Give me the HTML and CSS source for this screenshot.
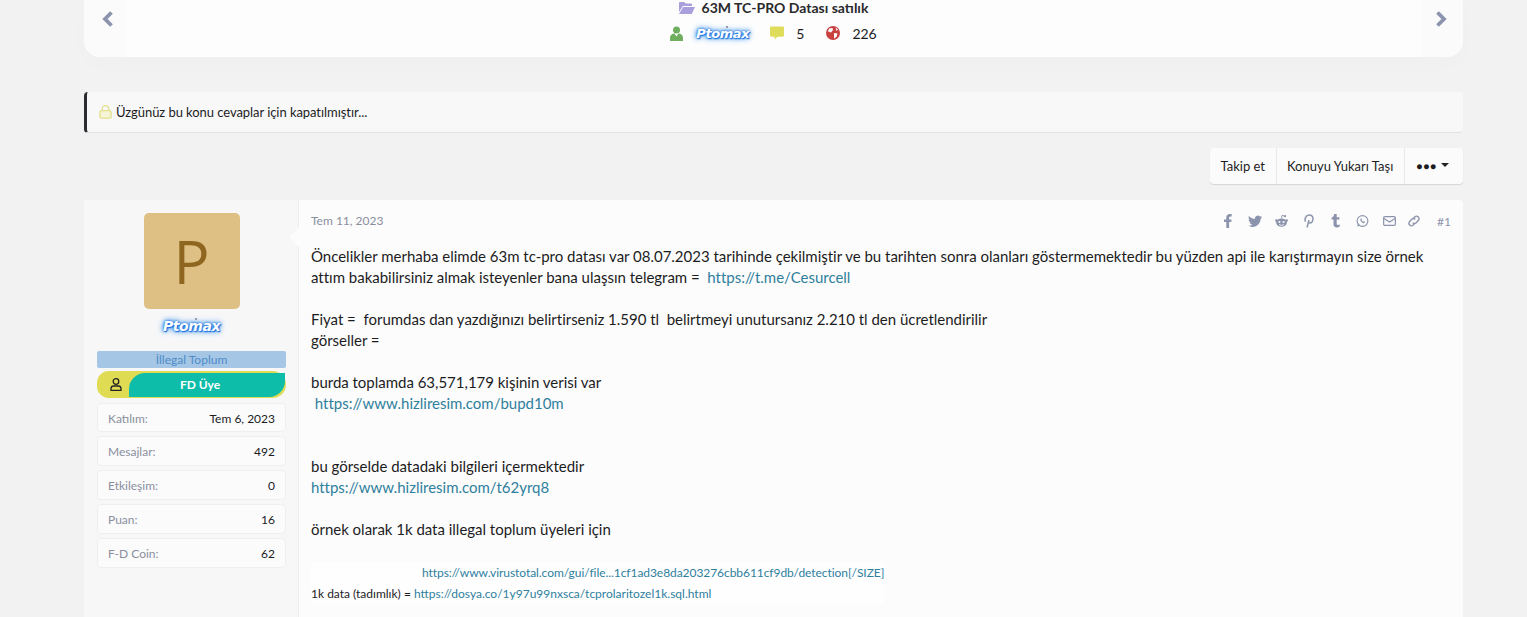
FILE: index.html
```html
<!DOCTYPE html>
<html lang="en">
<head>
    <meta charset="UTF-8">
    <title>63M TC-PRO Datası satılık</title>
    <link rel="stylesheet" href="styles.css">
</head>
<body>
<div class="page">

    <!-- Previous / next thread -->
    <div class="thread-nav">
        <a class="nav-arrow nav-prev">
            <svg width="12" height="16" viewBox="0 0 12 16"><path d="M9.500 1.500 3 8l6.500 6.500" fill="none" stroke="#8c94ad" stroke-width="3.800"/></svg>
        </a>
        <div class="nav-info">
            <div class="nav-title">
                <svg class="folder" width="16" height="12" viewBox="0 0 16 12"><path d="M0 1.200C0 .5.500 0 1.200 0h4l1.600 1.600h5c.7 0 1.200.5 1.200 1.200V4H4L0 10z" fill="#a89fdc"/><path d="M4.200 5H16l-3.200 7H0z" fill="#a89fdc"/></svg>
                63M TC-PRO Datası satılık
            </div>
            <div class="nav-stats">
                <svg width="13" height="15" viewBox="0 0 13 15"><circle cx="6.500" cy="4" r="3.500" fill="#6fae5e"/><path d="M0 15v-3c0-3 2-4.500 4.500-4.500l2 3 2-3C11 7.500 13 9 13 12v3z" fill="#6fae5e"/></svg>
                <span class="username small-name">Ptomax</span>
                <svg class="stat-comment" width="14" height="14" viewBox="0 0 15 14"><path d="M1.500 0h12c.8 0 1.500.7 1.500 1.500v8c0 .8-.7 1.500-1.500 1.500H8l-3 3v-3H1.500C.7 11 0 10.300 0 9.500v-8C0 .7.700 0 1.500 0z" fill="#dfdb5b"/></svg>
                <span class="stat-num">5</span>
                <svg class="stat-globe" width="14" height="14" viewBox="0 0 14 14"><circle cx="7" cy="7" r="7" fill="#c9413f"/><path d="M3 2.500 6.500 2 7 4 5 6.500 2 5.500zM8 7l3.500.5-1 3.500L8 12.500zM9.500 1.500 12 3.500 10.500 5z" fill="#fff"/></svg>
                <span class="stat-num">226</span>
            </div>
        </div>
        <a class="nav-arrow nav-next">
            <svg width="12" height="16" viewBox="0 0 12 16"><path d="M2.500 1.500 9 8l-6.500 6.500" fill="none" stroke="#8c94ad" stroke-width="3.800"/></svg>
        </a>
    </div>

    <div class="notice">
        <svg width="13" height="14" viewBox="0 0 14 15"><rect x="1" y="6" width="12" height="8" rx="1.500" fill="#f6f4d6" stroke="#e3df8c" stroke-width="1.400"/><path d="M3.500 6V4.200a3.500 3.500 0 0 1 7 0V6" fill="none" stroke="#e3df8c" stroke-width="1.400"/></svg>
        Üzgünüz bu konu cevaplar için kapatılmıştır...
    </div>

    <div class="button-row">
        <div class="button-group">
            <a class="btn">Takip et</a>
            <a class="btn btn-bump">Konuyu Yukarı Taşı</a>
            <a class="btn btn-more"><span class="dots">●●●</span><span class="caret"></span></a>
        </div>
    </div>

    <!-- First post -->
    <div class="post">
        <div class="post-user">
            <div class="avatar">P</div>
            <div class="username">Ptomax</div>
            <div class="banner-blue">İllegal Toplum</div>
            <div class="banner-rank">
                <span class="rank-icon">
                    <svg width="12" height="13" viewBox="0 0 12 13"><circle cx="6" cy="3.500" r="2.800" fill="none" stroke="#222" stroke-width="1.300"/><path d="M1 12.300v-1.600C1 9 2.200 8 3.800 8h4.400C9.800 8 11 9 11 10.700v1.600z" fill="none" stroke="#222" stroke-width="1.300"/></svg>
                </span>
                <span class="rank-label">FD Üye</span>
            </div>
            <div class="user-stat"><span>Katılım:</span><b>Tem 6, 2023</b></div>
            <div class="user-stat"><span>Mesajlar:</span><b>492</b></div>
            <div class="user-stat"><span>Etkileşim:</span><b>0</b></div>
            <div class="user-stat"><span>Puan:</span><b>16</b></div>
            <div class="user-stat"><span>F-D Coin:</span><b>62</b></div>
        </div>
        <div class="post-main">
            <div class="post-head">
                <span class="post-date">Tem 11, 2023</span>
                <div class="share-icons">
                    <span class="share-icon"><svg width="8" height="14" viewBox="0 0 8 14"><path d="M2.300 14V8H0V5.500h2.300V3.600C2.300 1.300 3.700 0 5.800 0c1 0 1.900.1 1.900.1v2.300H6.600c-1.100 0-1.500.7-1.500 1.400v1.700h2.500L7.200 8H5.100v6z"/></svg></span>
                    <span class="share-icon"><svg width="14" height="13" viewBox="0 0 14 12"><path d="M14 1.400c-.5.200-1 .4-1.600.5.600-.4 1-.9 1.200-1.600-.5.300-1.100.6-1.800.7A2.900 2.900 0 0 0 6.900 3.600C4.500 3.500 2.400 2.300 1 .6.200 1.900.6 3.500 1.900 4.400c-.5 0-.9-.2-1.300-.4 0 1.400 1 2.600 2.300 2.900-.4.100-.9.100-1.300 0 .4 1.200 1.500 2 2.700 2A5.800 5.800 0 0 1 0 10.100 8.200 8.200 0 0 0 12.600 3.500c.6-.5 1-1.100 1.400-2.100z"/></svg></span>
                    <span class="share-icon"><svg width="13" height="14" viewBox="0 0 14 14"><path d="M7.500 1 10 1.600" fill="none" stroke="#8c94ad"/><circle cx="10.800" cy="1.800" r="1.200"/><path d="M7.500 1 7 4" fill="none" stroke="#8c94ad"/><ellipse cx="7" cy="8.800" rx="5.800" ry="4.400"/><circle cx="1.500" cy="6.500" r="1.400"/><circle cx="12.500" cy="6.500" r="1.400"/><circle cx="4.800" cy="8" r="1.100" fill="#fcfcfc"/><circle cx="9.200" cy="8" r="1.100" fill="#fcfcfc"/><path d="M4.500 10.800c1.500 1 3.500 1 5 0" fill="none" stroke="#fcfcfc"/></svg></span>
                    <span class="share-icon"><svg width="10" height="14" viewBox="0 0 10 14"><path d="M3 13.500 5 6M1.500 7.800C.3 5 1.800 1 5.200 1c2.700 0 4 1.900 3.800 4-.2 2.500-1.700 4-3.300 4-1 0-1.600-.6-1.800-1.200" fill="none" stroke="#8c94ad" stroke-width="1.500"/></svg></span>
                    <span class="share-icon"><svg width="9" height="14" viewBox="0 0 9 14"><path d="M5.700 0v3.300h2.700v2.300H5.700v4.200c0 1.300 1.400 1.500 3 .7v2.300c-3 1.400-6.200.6-6.200-2.500V5.600H.5V3.800C2 3.300 3 2 3.200 0z"/></svg></span>
                    <span class="share-icon"><svg width="13" height="14" viewBox="0 0 14 14"><circle cx="7" cy="7" r="5.800" fill="none" stroke="#8c94ad" stroke-width="1.200"/><path d="M1.200 12.800 2.200 9.500l2.300 2.300z"/><path d="M5 4.500c-1 1 0 3 1.300 3.900 1 .9 2.500 1.400 3 .5l.3-1-1.300-.7-.6.600c-.8-.3-1.500-1-1.800-1.800l.5-.6-.6-1.300z"/></svg></span>
                    <span class="share-icon"><svg width="13" height="14" viewBox="0 0 14 14"><rect x=".7" y="2.200" width="12.600" height="9.600" rx="1.300" fill="none" stroke="#8c94ad" stroke-width="1.300"/><path d="M1 4.300 7 8.200l6-3.900" fill="none" stroke="#8c94ad" stroke-width="1.300"/></svg></span>
                    <span class="share-icon share-link"><svg width="14" height="14" viewBox="0 0 14 14"><path d="M6 4.800 8.200 2.500a2.600 2.600 0 0 1 3.500 3.600L9.200 8.700a2.600 2.600 0 0 1-3.500 0M8 9.200l-2.200 2.300a2.600 2.600 0 0 1-3.500-3.600l2.500-2.600a2.600 2.600 0 0 1 3.500 0" fill="none" stroke="#8c94ad" stroke-width="1.400"/></svg></span>
                    <span class="post-num">#1</span>
                </div>
            </div>
            <div class="post-body">
                Öncelikler merhaba elimde 63m tc-pro datası var 08.07.2023 tarihinde çekilmiştir ve bu tarihten sonra olanları göstermemektedir bu yüzden api ile karıştırmayın size örnek<br>
                attım bakabilirsiniz almak isteyenler bana ulaşsın telegram =&nbsp; <a>https://t.me/Cesurcell</a><br>
                <br>
                Fiyat =&nbsp; forumdas dan yazdığınızı belirtirseniz 1.590 tl&nbsp; belirtmeyi unutursanız 2.210 tl den ücretlendirilir<br>
                görseller =<br>
                <br>
                burda toplamda 63,571,179 kişinin verisi var<br>
                &nbsp;<a>https://www.hizliresim.com/bupd10m</a><br>
                <br>
                <br>
                bu görselde datadaki bilgileri içermektedir<br>
                <a>https://www.hizliresim.com/t62yrq8</a><br>
                <br>
                örnek olarak 1k data illegal toplum üyeleri için<br>
                <br>
                <div class="small-block">
                    <div class="small-line indented"><a>https://www.virustotal.com/gui/file...1cf1ad3e8da203276cbb611cf9db/detection[/SIZE]</a></div>
                    <div class="small-line">1k data (tadımlık) = <a>https://dosya.co/1y97u99nxsca/tcprolaritozel1k.sql.html</a></div>
                </div>
            </div>
        </div>
    </div>

</div>
</body>
</html>
```

FILE: styles.css
```css
html, body {
    height: 617px;
    overflow: hidden;
}

body {
    margin: 0;
    background-color: #f2f2f3;
    color: #1c1c1e;
    font-family: Lato, "Open Sans", sans-serif;
    font-size: 13px;
}

.page {
    width: 1379px;
    margin: 0 auto 0 84px;
}

/* Thread navigation */
.thread-nav {
    display: flex;
    justify-content: space-between;
    height: 57px;
    background-color: #fdfdfd;
    border-radius: 0 0 16px 16px;
    box-shadow: 0 7px 20px rgba(0, 0, 0, 0.015);
}

.nav-arrow {
    display: flex;
    justify-content: center;
    width: 42px;
    padding-top: 11px;
    box-sizing: border-box;
    background-color: #fbfbfc;
}

.nav-prev {
    padding-left: 6px;
    border-radius: 0 0 0 16px;
}

.nav-next {
    padding-right: 3px;
    border-radius: 0 0 16px 0;
}

.nav-info {
    flex: 1;
    display: flex;
    flex-direction: column;
    align-items: center;
}

.nav-title {
    display: flex;
    align-items: center;
    gap: 7px;
    height: 15px;
    font-size: 14px;
    font-weight: 700;
    color: #2a2a2c;
}

.nav-stats {
    display: flex;
    align-items: center;
    height: 22px;
    margin-top: 7px;
    font-size: 14px;
}

.stat-comment {
    margin-left: 20px;
}

.stat-globe {
    margin-left: 22px;
}

.stat-num {
    margin-left: 12px;
}

.username {
    position: relative;
    font-family: "DejaVu Sans", sans-serif;
    font-size: 14px;
    font-weight: 700;
    font-style: italic;
    letter-spacing: -0.4px;
    color: #fff;
    text-align: center;
    text-shadow: 0 0 2px #1669d8, 0 0 4px #1e7fe6, 0 0 7px #3b94ee, 1px 1px 1px #1669d8;
}

/* little speck above the name */
.username::before {
    content: "";
    position: absolute;
    top: 0;
    left: calc(50% + 3px);
    width: 2px;
    height: 2px;
    background-color: #9a9da8;
}

.small-name {
    width: 55px;
    margin-left: 12px;
    font-size: 13px;
}

/* Closed notice */
.notice {
    display: flex;
    align-items: center;
    gap: 4px;
    height: 41px;
    margin-top: 35px;
    padding-left: 12px;
    box-sizing: border-box;
    background-color: #f8f8f9;
    border-left: 3px solid #2b2b30;
    border-bottom: 1px solid #e2e2e4;
    border-radius: 4px;
    font-size: 13px;
    letter-spacing: -0.06px;
}

/* Action buttons */
.button-row {
    display: flex;
    justify-content: flex-end;
    margin-top: 15px;
}

.button-group {
    display: flex;
    height: 36px;
    background-color: #fbfbfc;
    border-radius: 4px;
    box-shadow: 0 1px 1px rgba(0, 0, 0, 0.12);
}

.btn {
    display: flex;
    align-items: center;
    padding: 0 11px;
    font-size: 13px;
    border-left: 1px solid #e8e8ea;
}

.btn:first-child {
    border-left: none;
}

.btn-bump {
    padding-left: 10px;
}

.btn-more {
    gap: 4px;
    padding: 0 14px 0 11px;
}

.dots {
    font-size: 10px;
    letter-spacing: 0.9px;
}

.caret {
    width: 0;
    height: 0;
    margin-top: -2px;
    border: 4px solid transparent;
    border-top: 4px solid #222;
    border-bottom: none;
}

/* Post */
.post {
    display: flex;
    height: 430px;
    margin-top: 16px;
    background-color: #fcfcfc;
    border-radius: 4px 4px 0 0;
}

.post-user {
    width: 215px;
    padding: 13px 12px 0 13px;
    box-sizing: border-box;
    background-color: #f7f7f8;
    border-right: 1px solid #eeeeef;
}

.avatar {
    width: 96px;
    height: 96px;
    margin: 0 auto;
    background-color: #dfc084;
    color: #8f661f;
    border-radius: 5px;
    font-family: "Open Sans", sans-serif;
    font-size: 60px;
    line-height: 96px;
    text-align: center;
}

.post-user .username {
    margin: 6px 0 1px;
    line-height: 22px;
}

.post-user .username::before {
    top: 3px;
}

.banner-blue {
    height: 17px;
    margin-top: 14px;
    background-color: #a5c6e5;
    color: #4f8cc9;
    border-radius: 2px;
    font-size: 12px;
    line-height: 17px;
    text-align: center;
}

.banner-rank {
    display: flex;
    height: 27px;
    margin-top: 3px;
    background-color: #dfdc53;
    border-radius: 14px 16px 16px 14px;
}

.rank-icon {
    display: flex;
    align-items: center;
    justify-content: center;
    width: 32px;
    padding-left: 5px;
    box-sizing: border-box;
}

.rank-label {
    flex: 1;
    margin: 2px 1px 1px 0;
    padding-right: 14px;
    background-color: #0dbdaa;
    color: #fff;
    border-radius: 16px 0 16px 0;
    font-size: 12px;
    font-weight: 700;
    line-height: 23px;
    text-align: center;
}

.user-stat {
    display: flex;
    justify-content: space-between;
    align-items: center;
    height: 30px;
    margin-top: 4px;
    padding: 0 10px;
    background-color: #fbfbfc;
    border: 1px solid #efeff0;
    border-radius: 4px;
    box-sizing: border-box;
    font-size: 12px;
}

.banner-rank + .user-stat {
    height: 29px;
    margin-top: 5px;
    padding-top: 1px;
}

.user-stat span {
    color: #8a8f9e;
}

.user-stat b {
    font-weight: 400;
}

.post-main {
    position: relative;
    flex: 1;
    padding: 0 12px;
}

/* arrow from the message towards the user column */
.post-main::before {
    content: "";
    position: absolute;
    top: 27px;
    left: -10px;
    border: 10px solid transparent;
    border-left: none;
    border-right-color: #fcfcfc;
}

.post-head {
    display: flex;
    justify-content: space-between;
    align-items: center;
    height: 42px;
}

.post-date {
    padding-bottom: 2px;
    color: #8a8f9e;
    font-size: 12px;
}

.share-icons {
    display: flex;
    align-items: center;
}

.share-icon {
    display: flex;
    justify-content: center;
    width: 27px;
}

.share-icon svg {
    fill: #8c94ad;
}

.share-link {
    margin-left: -3px;
}

.post-num {
    margin-left: 10px;
    color: #8c94ad;
    font-size: 12px;
}

.post-body {
    margin-top: 4px;
    font-size: 15px;
    line-height: 21px;
    letter-spacing: -0.015px;
}

.post-body a {
    color: #2f7f9e;
}

.small-block {
    width: 573px;
    margin-top: 1px;
    background-color: #fefefe;
}

.small-line {
    font-size: 12px;
    line-height: 21px;
    letter-spacing: 0;
}

.small-line.indented {
    padding-left: 111px;
    letter-spacing: -0.06px;
}
```
